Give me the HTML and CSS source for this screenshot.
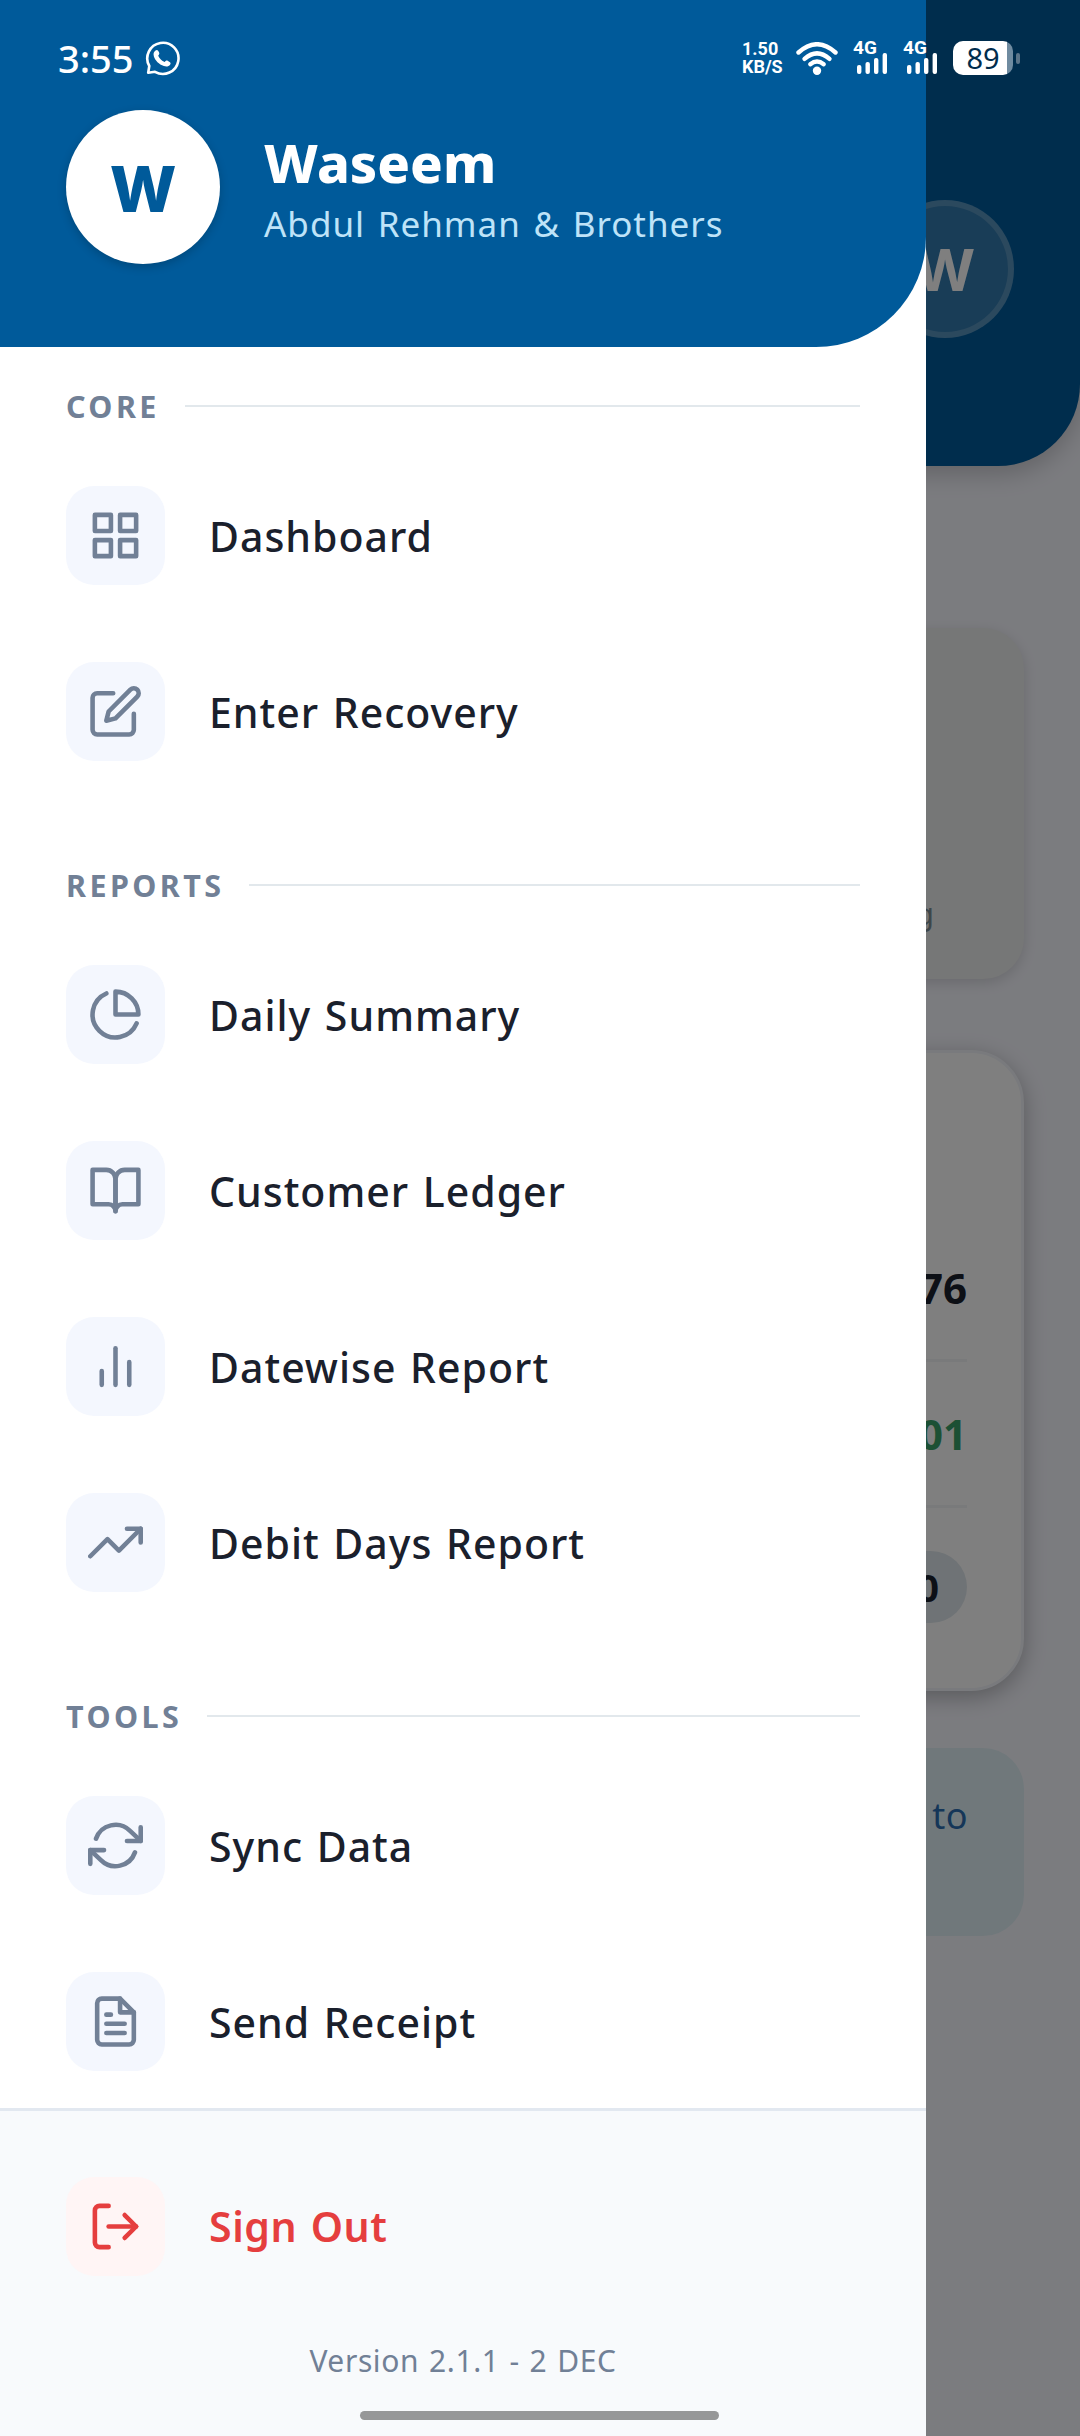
FILE: index.html
```html
<!DOCTYPE html>
<html lang="en">
<head>
  <meta charset="UTF-8" />
  <meta name="viewport" content="width=device-width, initial-scale=1.0" />
  <title>Recovery App</title>
  <link rel="stylesheet" href="styles.css">
</head>
<body>

  <!-- Dashboard behind the drawer -->
  <main class="page">
    <header class="page-header">
      <div class="page-avatar">W</div>
    </header>
    <section class="card card-muted"><span class="card-note">g</span></section>
    <section class="card card-summary">
      <div class="row"><b>76</b></div>
      <div class="row row-green"><b>01</b></div>
      <div class="row row-last"><b class="pill">0</b></div>
    </section>
    <section class="notice">to</section>
  </main>
  <div class="overlay"></div>

  <!-- Side drawer -->
  <aside class="drawer">
    <header class="drawer-header">
      <div class="avatar">W</div>
      <div class="user">
        <div class="user-name">Waseem</div>
        <div class="user-company">Abdul Rehman &amp; Brothers</div>
      </div>
    </header>

    <nav class="menu">
      <h2 class="menu-title">CORE</h2>
      <a class="item">
        <span class="icon"><svg viewBox="0 0 24 24"><rect x="3" y="3" width="7" height="7"/><rect x="14" y="3" width="7" height="7"/><rect x="14" y="14" width="7" height="7"/><rect x="3" y="14" width="7" height="7"/></svg></span>
        <span class="label">Dashboard</span>
      </a>
      <a class="item">
        <span class="icon"><svg viewBox="0 0 24 24"><path d="M11 4H4a2 2 0 0 0-2 2v14a2 2 0 0 0 2 2h14a2 2 0 0 0 2-2v-7"/><path d="M18.5 2.5a2.121 2.121 0 0 1 3 3L12 15l-4 1 1-4 9.500-9.500z"/></svg></span>
        <span class="label">Enter Recovery</span>
      </a>

      <h2 class="menu-title">REPORTS</h2>
      <a class="item">
        <span class="icon"><svg viewBox="0 0 24 24"><path d="M21.210 15.890A10 10 0 1 1 8 2.830"/><path d="M22 12A10 10 0 0 0 12 2v10z"/></svg></span>
        <span class="label">Daily Summary</span>
      </a>
      <a class="item">
        <span class="icon"><svg viewBox="0 0 24 24"><path d="M2 3h6a4 4 0 0 1 4 4v14a3 3 0 0 0-3-3H2z"/><path d="M22 3h-6a4 4 0 0 0-4 4v14a3 3 0 0 1 3-3h7z"/></svg></span>
        <span class="label">Customer Ledger</span>
      </a>
      <a class="item">
        <span class="icon"><svg viewBox="0 0 24 24"><line x1="18" y1="20" x2="18" y2="10"/><line x1="12" y1="20" x2="12" y2="4"/><line x1="6" y1="20" x2="6" y2="14"/></svg></span>
        <span class="label">Datewise Report</span>
      </a>
      <a class="item">
        <span class="icon"><svg viewBox="0 0 24 24"><polyline points="23 6 13.500 15.500 8.500 10.500 1 18"/><polyline points="17 6 23 6 23 12"/></svg></span>
        <span class="label">Debit Days Report</span>
      </a>

      <h2 class="menu-title">TOOLS</h2>
      <a class="item">
        <span class="icon"><svg viewBox="0 0 24 24"><polyline points="23 4 23 10 17 10"/><polyline points="1 20 1 14 7 14"/><path d="M3.510 9a9 9 0 0 1 14.850-3.360L23 10M1 14l4.640 4.360A9 9 0 0 0 20.490 15"/></svg></span>
        <span class="label">Sync Data</span>
      </a>
      <a class="item">
        <span class="icon"><svg viewBox="0 0 24 24"><path d="M14 2H6a2 2 0 0 0-2 2v16a2 2 0 0 0 2 2h12a2 2 0 0 0 2-2V8z"/><polyline points="14 2 14 8 20 8"/><line x1="16" y1="13" x2="8" y2="13"/><line x1="16" y1="17" x2="8" y2="17"/><polyline points="10 9 9 9 8 9"/></svg></span>
        <span class="label">Send Receipt</span>
      </a>
    </nav>

    <footer class="drawer-footer">
      <a class="item sign-out">
        <span class="icon"><svg viewBox="0 0 24 24"><path d="M9 21H5a2 2 0 0 1-2-2V5a2 2 0 0 1 2-2h4"/><polyline points="16 17 21 12 16 7"/><line x1="21" y1="12" x2="9" y2="12"/></svg></span>
        <span class="label">Sign Out</span>
      </a>
      <div class="version">Version 2.1.1 - 2 DEC</div>
    </footer>
  </aside>

  <!-- Phone status bar -->
  <div class="status-bar">
    <span class="time">3:55</span>
    <svg class="whatsapp" viewBox="0 0 36 36" fill="none"><path d="M3.200 32.800L4.300 26A15.600 15.600 0 1 1 10 31.800z" stroke="#fff" stroke-width="2.600" stroke-linejoin="round"/><path d="M10.500 10.500c1.500-1.200 2.700-.5 3.600 2 .5 1.300.2 1.900-.9 3.200 1.300 2.900 3.500 5.100 6.500 6.300 1.500-1.500 2-1.700 3.300-1 2.600 1.300 3.200 2 2.100 3.700-1.200 1.700-3.700 2.200-6.200 1.300-5-1.800-8.700-5.500-10-9.600-.7-2.500-.4-4.500 1.600-5.900z" fill="#fff"/></svg>
    <span class="speed">1.50<br>KB/S</span>
    <svg class="wifi" viewBox="0 0 42 33" fill="none" stroke="#fff" stroke-width="4.400" stroke-linecap="round"><path d="M2.500 10.500Q21-6 39.500 10.500"/><path d="M8.500 16.800Q21 6 33.500 16.800"/><path d="M14.300 22.200Q21 17 27.700 22.200"/><circle cx="21" cy="28.800" r="4.200" fill="#fff" stroke="none"/></svg>
    <span class="signal">4G<svg viewBox="0 0 32 21" fill="#fff"><rect x="1" y="12" width="4.400" height="9" rx="2"/><rect x="9.500" y="9" width="4.400" height="12" rx="2"/><rect x="18" y="5" width="4.400" height="16" rx="2"/><rect x="26.600" y="0" width="4.400" height="21" rx="2"/></svg></span>
    <span class="signal">4G<svg viewBox="0 0 32 21" fill="#fff"><rect x="1" y="12" width="4.400" height="9" rx="2"/><rect x="9.500" y="9" width="4.400" height="12" rx="2"/><rect x="18" y="5" width="4.400" height="16" rx="2"/><rect x="26.600" y="0" width="4.400" height="21" rx="2"/></svg></span>
    <span class="battery">89</span>
    <span class="battery-tip"></span>
  </div>

  <div class="home-handle"></div>

</body>
</html>
```
FILE: styles.css
```css
* {
  box-sizing: border-box;
}

body {
  margin: 0;
  position: relative;
  width: 1080px;
  height: 2436px;
  overflow: hidden;
  font-family: "Noto Sans", "Open Sans", sans-serif;
  background: #f7f8ff;
  color: #1a202c;
}

/* page behind */
.page-header {
  height: 466px;
  padding: 200px 66px 0;
  background: #005a9a;
  border-bottom-right-radius: 82px;
  box-shadow: 0 8px 24px rgba(0, 0, 0, 0.2);
  display: flex;
  justify-content: flex-end;
}

.page-avatar {
  width: 138px;
  height: 138px;
  border-radius: 50%;
  border: 6px solid rgba(255, 255, 255, 0.18);
  background: rgba(255, 255, 255, 0.2);
  color: #fff;
  font-family: Inter, sans-serif;
  font-size: 58px;
  font-weight: 700;
  line-height: 128px;
  text-align: center;
}

.card {
  margin: 0 56px;
}

.card-muted {
  height: 351px;
  margin-top: 162px;
  padding: 264px 90px 0;
  border-radius: 41px;
  background: #edeeee;
  box-shadow: 0 4px 14px rgba(0, 0, 0, 0.14);
  text-align: right;
}

.card-note {
  font-size: 31px;
  line-height: 42px;
  color: #7b8c95;
}

.card-summary {
  height: 641px;
  margin-top: 71px;
  padding: 163px 54px 0;
  border: 3px solid #f3f5fa;
  border-radius: 53px;
  background: #fff;
  box-shadow: 0 6px 22px rgba(0, 0, 0, 0.28);
}

.row {
  height: 146px;
  border-bottom: 3px solid #f3f4f6;
  text-align: right;
  font-size: 42px;
  line-height: 143px;
}

.row-green {
  color: #38a169;
}

.row-last {
  border: 0;
  display: flex;
  justify-content: flex-end;
  padding-top: 43px;
}

.pill {
  height: 72px;
  padding: 0 28px;
  border-radius: 36px;
  background: #dfe7ec;
  font-size: 38px;
  line-height: 72px;
}

.notice {
  height: 188px;
  margin: 57px 56px 0;
  padding: 40px 56px;
  border-radius: 41px;
  background: #e1f1f7;
  color: #2b6cb0;
  font-size: 36px;
  line-height: 55px;
  letter-spacing: 0.5px;
  text-align: right;
}

.overlay {
  position: absolute;
  inset: 0;
  background: rgba(0, 0, 0, 0.5);
}

/* drawer */
.drawer {
  position: absolute;
  top: 0;
  left: 0;
  width: 926px;
  height: 2436px;
  display: flex;
  flex-direction: column;
  background: #fff;
}

.drawer-header {
  height: 347px;
  padding: 110px 66px 0;
  display: flex;
  align-items: flex-start;
  gap: 44px;
  background: #005a9a;
  border-bottom-right-radius: 110px;
}

.avatar {
  width: 154px;
  height: 154px;
  border-radius: 50%;
  background: #fff;
  box-shadow: 0 3px 10px rgba(0, 0, 0, 0.2);
  color: #005a9a;
  font-family: Inter, sans-serif;
  font-size: 63px;
  font-weight: 800;
  line-height: 158px;
  text-align: center;
}

.user {
  padding-top: 15px;
  color: #fff;
}

.user-name {
  font-size: 54px;
  font-weight: 800;
  line-height: 74px;
}

.user-company {
  font-size: 35px;
  line-height: 49px;
  letter-spacing: 1px;
  word-spacing: 2.5px;
  color: #bee3f8;
}

.menu {
  flex: 1;
  padding: 38.5px 66px 0;
  overflow: hidden;
}

.menu-title {
  display: flex;
  align-items: center;
  gap: 25px;
  height: 41px;
  margin: 65px 0 21px;
  font-size: 30.5px;
  font-weight: 700;
  letter-spacing: 3.4px;
  color: #718096;
}

.menu-title:first-child {
  margin-top: 0;
}

.menu-title::after {
  content: "";
  flex: 1;
  height: 2px;
  background: #e2e8ec;
}

.item {
  display: flex;
  align-items: center;
  gap: 44px;
  height: 176px;
}

.icon {
  width: 99px;
  height: 99px;
  border-radius: 28px;
  background: #f4f7fe;
  display: flex;
  align-items: center;
  justify-content: center;
}

.icon svg {
  width: 55px;
  height: 55px;
  fill: none;
  stroke: #718096;
  stroke-width: 2;
  stroke-linecap: round;
  stroke-linejoin: round;
}

.label {
  font-size: 41px;
  font-weight: 500;
  line-height: 56px;
  letter-spacing: 1px;
  word-spacing: 2px;
}

.drawer-footer {
  height: 328px;
  padding: 27px 66px 0;
  border-top: 3px solid #e2e8f0;
  background: #f8fafc;
}

.sign-out .icon {
  background: #fff5f5;
}

.sign-out .icon svg {
  stroke: #e53e3e;
}

.sign-out .label {
  color: #e53e3e;
  font-weight: 600;
  letter-spacing: 0.6px;
}

.version {
  margin-top: 26px;
  font-size: 30px;
  line-height: 42px;
  letter-spacing: 0.6px;
  word-spacing: 1.5px;
  text-align: center;
  color: #718096;
}

/* status bar */
.status-bar {
  position: absolute;
  top: 0;
  left: 0;
  width: 1080px;
  height: 116px;
  padding: 0 60px 0 58px;
  display: flex;
  align-items: center;
  color: #fff;
}

.time {
  width: 76px;
  font-size: 38px;
  font-weight: 500;
}

.whatsapp {
  width: 36px;
  height: 36px;
  margin-left: 11px;
}

.speed {
  width: 54px;
  margin-left: auto;
  font-family: Roboto, sans-serif;
  font-size: 18px;
  font-weight: 700;
  line-height: 18px;
}

.wifi {
  width: 42px;
  height: 33px;
  margin-right: 15px;
}

.signal {
  width: 50px;
  height: 34px;
  display: flex;
  flex-direction: column;
  font-family: Roboto, sans-serif;
  font-size: 19px;
  font-weight: 700;
  line-height: 14px;
}

.signal svg {
  width: 32px;
  height: 21px;
  margin: -2px 0 0 3px;
}

.battery {
  width: 60px;
  height: 34px;
  border-radius: 10px;
  background: linear-gradient(to right, #fff 54px, #6f8ba0 54px);
  color: #002d4d;
  font-size: 29px;
  line-height: 34px;
  text-align: center;
}

.battery-tip {
  width: 4px;
  height: 11px;
  margin-left: 3px;
  border-radius: 2px;
  background: #5b7488;
}

.home-handle {
  position: absolute;
  left: 360px;
  bottom: 16px;
  width: 359px;
  height: 9px;
  border-radius: 5px;
  background: #969798;
}
```
